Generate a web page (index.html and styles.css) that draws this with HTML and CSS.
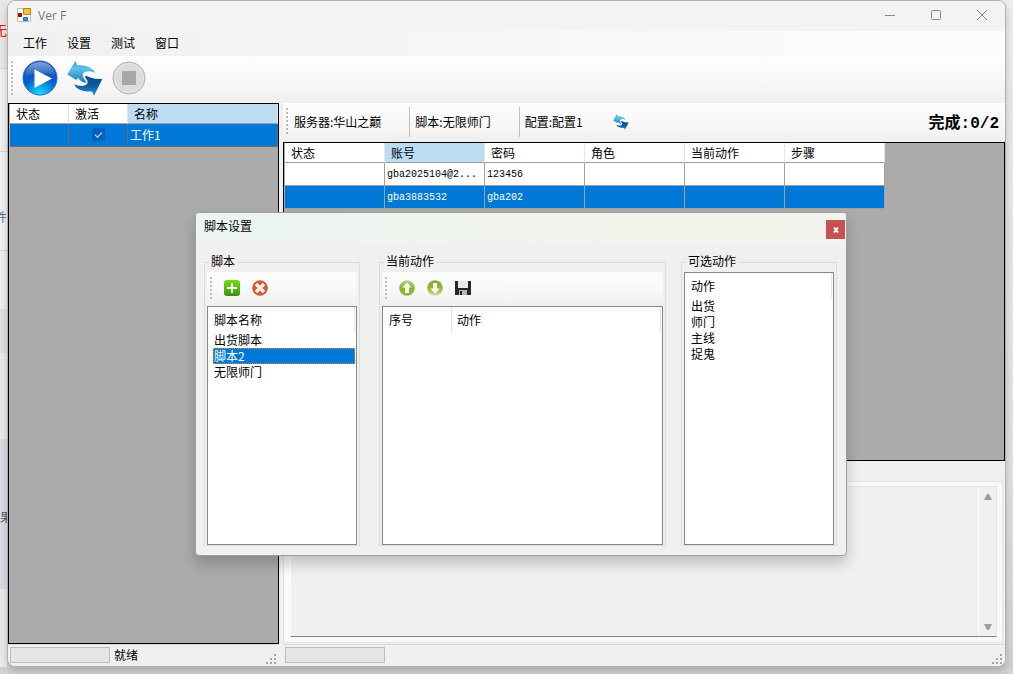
FILE: index.html
```html
<!DOCTYPE html>
<html lang="zh-CN">
<head>
<meta charset="utf-8">
<title>Ver F</title>
<link rel="stylesheet" href="styles.css">
</head>
<body>
<svg class="defs" aria-hidden="true">
  <defs>
    <linearGradient id="light-blue" x1="0" y1="0" x2="0" y2="1"><stop offset="0" stop-color="#3aa0dc"/><stop offset="0.35" stop-color="#5cc0ea"/><stop offset="1" stop-color="#1a7cc4"/></linearGradient>
    <linearGradient id="dark-blue" x1="0" y1="0" x2="0" y2="1"><stop offset="0" stop-color="#0b4d88"/><stop offset="0.5" stop-color="#0a5ba0"/><stop offset="1" stop-color="#2a9ae0"/></linearGradient>
    <radialGradient id="play-fill" cx="0.5" cy="1" r="0.95"><stop offset="0" stop-color="#10e4fb"/><stop offset="0.25" stop-color="#08b0ee"/><stop offset="0.55" stop-color="#0560cc"/><stop offset="1" stop-color="#1148b4"/></radialGradient>
    <linearGradient id="gloss" x1="0" y1="0" x2="0" y2="1"><stop offset="0" stop-color="#fff" stop-opacity="0.5"/><stop offset="1" stop-color="#fff" stop-opacity="0.05"/></linearGradient>
    <linearGradient id="add-fill" x1="0" y1="0" x2="0" y2="1"><stop offset="0" stop-color="#6fdc12"/><stop offset="0.6" stop-color="#4fb80c"/><stop offset="1" stop-color="#3a8a0c"/></linearGradient>
    <linearGradient id="up-fill" x1="0" y1="0" x2="0" y2="1"><stop offset="0" stop-color="#bcd58c"/><stop offset="0.5" stop-color="#8db52c"/><stop offset="1" stop-color="#94b83c"/></linearGradient>
    <linearGradient id="down-fill" x1="0" y1="0" x2="0" y2="1"><stop offset="0" stop-color="#86ae22"/><stop offset="0.5" stop-color="#90b838"/><stop offset="1" stop-color="#cfe0a8"/></linearGradient>
    <symbol id="refresh" viewBox="0 0 102 104">
      <path fill="url(#light-blue)" d="M0 42 23 3 29 15C50 15 73 20 80 37 68 31 50 30 45 40 42 50 52 56 55 66 45 65 36 60 31 51L26 58Z"/>
      <path fill="url(#dark-blue)" d="M101 55 77 103 71 91C50 92 27 88 20 70 34 77 53 77 58 67 61 58 52 54 50 46 60 46 68 52 80 54Z"/>
    </symbol>
  </defs>
</svg>
<div class="desktop">
  <div class="backdrop" aria-hidden="true">
    <div class="band band-top"><span class="bg-red">无</span></div>
    <div class="band band-a"></div>
    <div class="band band-b"><span class="bg-blue">件</span></div>
    <div class="band band-c"></div>
    <div class="band band-d"></div>
    <div class="band band-e"></div>
    <div class="band band-f"><span class="bg-gray">果</span></div>
  </div>
  <main class="window">
    <header class="titlebar">
      <svg class="app-icon" viewBox="0 0 14 14"><path fill="#fff" stroke="#bbb" d="M.5.5h13v13H.5z"/><path fill="#f4c430" stroke="#b88a18" d="M6.500.500h7v6h-7z"/><path fill="#b81414" stroke="#800" d="M1.500 5.500h3v3h-3z"/><path fill="#4a8be8" stroke="#2a60c0" d="M6.500 9.500h4v3h-4z"/></svg>
      <h1 class="title">Ver F</h1>
      <button class="win-btn" type="button" aria-label="最小化"><svg viewBox="0 0 12 12"><path d="M1 6.500h10"/></svg></button>
      <button class="win-btn" type="button" aria-label="最大化"><svg viewBox="0 0 12 12"><rect x="1.500" y="1.500" width="9" height="9" rx="1"/></svg></button>
      <button class="win-btn" type="button" aria-label="关闭"><svg viewBox="0 0 12 12"><path d="M1 1l10 10M11 1 1 11"/></svg></button>
    </header>
    <nav class="menubar">
      <button type="button">工作</button><button type="button">设置</button><button type="button">测试</button><button type="button">窗口</button>
    </nav>
    <div class="toolbar main-tools">
      <span class="grip"></span>
      <button class="big-tool" type="button" aria-label="开始"><svg viewBox="0 0 36 36"><circle cx="18" cy="18" r="17" fill="url(#play-fill)" stroke="#2a68c4"/><path fill="url(#gloss)" d="M3 16C3 7 10 2 18 2s15 5 15 14c-8-4-22-3-30 0z"/><path fill="#fff" d="M12.500 9.500 30 18.500 12.500 28z"/></svg></button>
      <button class="big-tool" type="button" aria-label="刷新"><svg viewBox="0 0 102 104"><use href="#refresh"/></svg></button>
      <button class="big-tool" type="button" aria-label="停止"><svg viewBox="0 0 36 36"><circle cx="17" cy="18" r="16" fill="#dcdcdc" stroke="#b0b0b0"/><circle cx="17" cy="18" r="14.500" fill="none" stroke="#e8e8e8"/><path fill="#a8a8a8" d="M10 11h14v14H10z"/></svg></button>
    </div>
    <div class="workspace">
      <section class="column">
        <div class="grid-panel">
          <table class="data jobs">
            <colgroup><col class="job-col"><col class="job-col"><col></colgroup>
            <thead><tr><th>状态</th><th>激活</th><th class="current">名称</th></tr></thead>
            <tbody><tr class="selected"><td></td><td class="center"><input class="check" type="checkbox" checked aria-label="激活"></td><td>工作1</td></tr></tbody>
          </table>
        </div>
        <footer class="status"><progress value="0" max="100" aria-label="进度"></progress><span>就绪</span><svg class="size-grip" viewBox="0 0 10 10"><path d="M8 0h2v2H8zM4 4h2v2H4zM8 4h2v2H8zM0 8h2v2H0zM4 8h2v2H4zM8 8h2v2H8z"/></svg></footer>
      </section>
      <section class="column">
        <div class="toolbar info-tools">
          <span class="grip"></span>
          <button class="info" type="button">服务器:华山之巅</button>
          <button class="info" type="button">脚本:无限师门</button>
          <button class="info" type="button">配置:配置1</button>
          <button class="refresh-small" type="button" aria-label="刷新"><svg viewBox="0 0 102 104"><use href="#refresh"/></svg></button>
          <strong class="done">完成:0/2</strong>
        </div>
        <div class="grid-panel accounts-panel">
          <table class="data accounts">
            <thead><tr><th>状态</th><th class="current">账号</th><th>密码</th><th>角色</th><th>当前动作</th><th>步骤</th></tr></thead>
            <tbody>
              <tr><td></td><td>gba2025104@2...</td><td>123456</td><td></td><td></td><td></td></tr>
              <tr class="selected"><td></td><td>gba3883532</td><td>gba202</td><td></td><td></td><td></td></tr>
            </tbody>
          </table>
        </div>
        <div class="log">
          <textarea readonly aria-label="日志"></textarea>
          <div class="scroll">
            <button type="button" aria-label="向上"><svg viewBox="0 0 10 8"><path d="M1 7 4 1h2l3 6z"/></svg></button>
            <button type="button" aria-label="向下"><svg viewBox="0 0 10 8"><path d="M1 1h8L6 7H4z"/></svg></button>
          </div>
        </div>
        <footer class="status"><progress value="0" max="100" aria-label="进度"></progress><svg class="size-grip" viewBox="0 0 10 10"><path d="M8 0h2v2H8zM4 4h2v2H4zM8 4h2v2H8zM0 8h2v2H0zM4 8h2v2H4zM8 8h2v2H8z"/></svg></footer>
      </section>
    </div>
  </main>
  <section class="dialog" role="dialog" aria-labelledby="dialog-title">
    <header class="dialog-title"><h2 id="dialog-title">脚本设置</h2><button class="close" type="button" aria-label="关闭"><svg viewBox="0 0 8 8"><path d="M2 1.500 6 6.500M6 1.500 2 6.500"/></svg></button></header>
    <div class="groups">
      <fieldset class="group scripts">
        <legend>脚本</legend>
        <div class="toolbar group-tools">
          <span class="grip"></span>
          <button type="button" aria-label="添加"><svg viewBox="0 0 16 16"><rect width="16" height="16" rx="3" fill="url(#add-fill)"/><path stroke="#fff" stroke-width="2" d="M8 3v10M3 8h10"/></svg></button>
          <button type="button" aria-label="删除"><svg viewBox="0 0 16 16"><circle cx="8" cy="8" r="7.800" fill="#cb5f35"/><path stroke="#f4f1ee" stroke-width="3.400" d="M4 4l8 8M12 4l-8 8"/></svg></button>
        </div>
        <div class="list">
          <table>
            <thead><tr><th>脚本名称</th></tr></thead>
            <tbody><tr><td>出货脚本</td></tr><tr class="picked"><td>脚本2</td></tr><tr><td>无限师门</td></tr></tbody>
          </table>
        </div>
      </fieldset>
      <fieldset class="group actions">
        <legend>当前动作</legend>
        <div class="toolbar group-tools">
          <span class="grip"></span>
          <button type="button" aria-label="上移"><svg viewBox="0 0 16 16"><circle cx="8" cy="8" r="7.800" fill="url(#up-fill)"/><path fill="#fff" d="M8 2.500 12.500 7.500H10V13H6V7.500H3.500z"/></svg></button>
          <button type="button" aria-label="下移"><svg viewBox="0 0 16 16"><circle cx="8" cy="8" r="7.800" fill="url(#down-fill)"/><path fill="#fff" d="M8 13.500 3.500 8.500H6V3h4v5.500h2.500z"/></svg></button>
          <button type="button" aria-label="保存"><svg viewBox="0 0 16 16"><path fill="#26282c" d="M0 1h3v7h10V1h3v14H0z"/><path fill="#e4e9ee" d="M3 1h10v7H3z"/><path fill="#b4b4b4" d="M4 10h8v5H4z"/><path fill="#222" d="M5 11h2v4H5z"/></svg></button>
        </div>
        <div class="list">
          <table>
            <colgroup><col class="index-col"><col></colgroup>
            <thead><tr><th>序号</th><th class="after">动作</th></tr></thead>
          </table>
        </div>
      </fieldset>
      <fieldset class="group choices">
        <legend>可选动作</legend>
        <div class="list">
          <table>
            <thead><tr><th>动作</th></tr></thead>
            <tbody><tr><td>出货</td></tr><tr><td>师门</td></tr><tr><td>主线</td></tr><tr><td>捉鬼</td></tr></tbody>
          </table>
        </div>
      </fieldset>
    </div>
  </section>
</div>
</body>
</html>
```
FILE: styles.css
```css
* { box-sizing: border-box; }
body { margin: 0; font: 12px/16px "Noto Sans CJK SC", sans-serif; color: #000; }
button { margin: 0; padding: 0; border: 0; background: none; font: inherit; color: inherit; }
svg { display: block; }
h1, h2 { margin: 0; font: inherit; }
.defs { position: absolute; width: 0; height: 0; }

.desktop { position: relative; display: flex; height: 100vh; min-height: 600px; padding: 0 7px 7px 0; overflow: hidden; background: linear-gradient(#eee, #e2e2e2 70%, #d2d2d2); }
.backdrop { display: flex; flex-direction: column; width: 7px; overflow: hidden; background: #ececec; }
.band { display: flex; align-items: center; border-bottom: 1px solid #d8d8d8; }
.band-top { height: 69px; justify-content: flex-end; background: #e9e9e9; padding-bottom: 8px; }
.band-a { height: 83px; background: #f2f2f2; }
.band-b { height: 99px; padding-top: 32px; background: #f2f2f2; justify-content: flex-end; }
.band-c { height: 58px; border: 0; background: #f0f0f0; }
.band-d { height: 44px; border: 0; background: #dfe1e6; }
.band-e { height: 86px; border: 0; background: #ececec; }
.band-f { height: 150px; border: 0; padding-top: 6px; background: #dcdee4; }
.bg-red { color: #f00; font-size: 13px; }
.bg-blue { color: #5a6f90; }
.bg-gray { color: #555a66; }

.window { display: flex; flex: 1; flex-direction: column; min-width: 0; border: 1px solid #b0b0b0; border-radius: 8px; overflow: hidden; background: #f0f0f0; box-shadow: 0 4px 8px rgba(0, 0, 0, 0.2); }
.titlebar { display: flex; align-items: center; height: 30px; padding: 0 0 2px 9px; background: #f3f3f3; }
.app-icon { width: 14px; height: 14px; }
.title { flex: 1; padding: 2px 0 0 7px; color: #777; font-family: "Open Sans", "Noto Sans", sans-serif; }
.win-btn { display: flex; align-items: center; justify-content: center; width: 46px; height: 28px; }
.win-btn svg { width: 12px; height: 12px; fill: none; stroke: #888; }
.menubar { display: flex; height: 25px; padding: 0 0 2px 5px; background: linear-gradient(90deg, #f0f0f0, #fcfcfc 90%); }
.menubar button { padding: 0 10px; }

.toolbar { display: flex; align-items: center; background: linear-gradient(#fdfdfd, #f7f7f7 60%, #efefef); }
.grip { width: 2px; background: repeating-linear-gradient(#bcbcbc 0 2px, transparent 2px 4px); }
.main-tools { height: 47px; padding: 0 3px 4px; gap: 9px; }
.main-tools .grip { height: 34px; }
.big-tool, .big-tool svg { width: 36px; height: 36px; }

.workspace { display: grid; flex: 1; grid-template-columns: 271px minmax(0, 1fr); column-gap: 4px; min-height: 0; }
.column { display: flex; flex-direction: column; min-width: 0; min-height: 0; }
.grid-panel { flex: 1; padding-left: 1px; border: 1px solid #000; background: #ababab; overflow: hidden; }
.accounts-panel { flex: 317 1 0; }
.data { border-collapse: separate; border-spacing: 0; table-layout: fixed; }
.data th { height: 20px; padding: 0 6px; border-right: 1px solid #e5e5e5; border-bottom: 1px solid #a0a0a0; background: #fff; font-weight: normal; text-align: left; }
.data th.current { background: #bcdcf4; }
.data td { height: 23px; padding: 0 2px; border-right: 1px solid #a0a0a0; border-bottom: 1px solid #a0a0a0; background: #fff; background-clip: padding-box; white-space: nowrap; }
.data .selected td { background-color: #0078d7; color: #fff; }
.jobs { width: 100%; }
.data.jobs td { border-color: #6b6b6b; }
.job-col { width: 59px; }
.data .center { text-align: center; line-height: 12px; }
.accounts { width: 600px; }
.accounts td { padding-top: 2px; font-family: "Liberation Mono", "Noto Sans CJK SC", monospace; font-size: 10px; }
.check { display: inline-flex; align-items: center; justify-content: center; width: 13px; height: 13px; margin: 0 0 2px; border-radius: 3px; background: #0561b9; appearance: none; vertical-align: middle; }
.check::before { content: ""; width: 6px; height: 3px; border-bottom: 1px solid #d0e4f6; border-left: 1px solid #d0e4f6; transform: rotate(-45deg); }

.info-tools { height: 39px; padding: 0 6px 2px 3px; }
.info-tools .grip { height: 28px; margin-right: 6px; }
.info { height: 30px; margin-right: 5px; padding-right: 28px; border-right: 1px solid #bdbdbd; white-space: nowrap; }
.info:nth-of-type(3) { margin-right: 2px; border: 0; }
.refresh-small, .refresh-small svg { width: 16px; height: 16px; }
.done { margin-left: auto; padding-top: 4px; font: bold 16px/20px "Liberation Mono", "Noto Sans CJK SC", monospace; }

.log { display: flex; flex: 151 1 0; margin: 20px 2px 1px 0; padding: 4px 5px 5px 6px; border: 1px solid #e3e3e3; background: #f9f9f9; }
.log textarea { flex: 1; min-width: 0; margin: 0; padding: 2px; border: 1px solid #fff; border-top-color: #e3e3e3; border-bottom-color: #808080; background: #f0f0f0; outline: 0; resize: none; }
.scroll { display: flex; flex-direction: column; justify-content: space-between; width: 18px; padding: 6px 4px 5px; border-top: 1px solid #e3e3e3; border-right: 1px solid #e3e3e3; border-bottom: 1px solid #808080; background: #f0f0f0; }
.scroll svg { width: 10px; height: 8px; fill: #9c9c9c; }
.status { display: flex; align-items: center; height: 22px; padding: 0 3px 1px 2px; gap: 4px; border-top: 1px solid #d8d8d8; background: #f0f0f0; }
.status progress { width: 100px; height: 16px; border: 1px solid #bcbcbc; background: #e6e6e6; appearance: none; }
.status progress::-webkit-progress-bar { background: #e6e6e6; }
.size-grip { align-self: flex-end; width: 10px; height: 10px; margin: 0 0 1px auto; fill: #a6a6a6; }

.dialog { position: absolute; top: 212px; left: 195px; width: 652px; border: 1px solid #a0a0a0; border-radius: 4px; background: #f0f0f0; box-shadow: 0 8px 14px rgba(0, 0, 0, 0.2); overflow: hidden; }
.dialog-title { display: flex; justify-content: space-between; align-items: center; height: 30px; padding: 3px 1px 0 8px; background: linear-gradient(90deg, #ebf5f1, #f3f3eb 70%, #f3f3ed); }
.dialog-title h2 { line-height: 20px; align-self: flex-start; }
.close { display: flex; align-items: center; justify-content: center; width: 19px; height: 19px; background: #c75050; }
.close svg { width: 8px; height: 8px; stroke: #fff; stroke-width: 2; }
.groups { display: flex; gap: 15px; padding: 10px 9px 9px 8px; }
.group { display: flex; flex-direction: column; min-width: 0; margin: 0; padding: 1px 2px 0; border: 1px solid #dcdcdc; }
.group legend { height: 18px; margin-left: 2px; padding: 0 2px; line-height: 16px; }
.scripts { width: 156px; margin-right: 4px; }
.actions { flex: 1; }
.choices { width: 156px; }
.group-tools { height: 34px; padding: 0 3px 2px; gap: 12px; border-radius: 3px; }
.group-tools .grip { height: 22px; }
.group-tools button, .group-tools button svg { width: 16px; height: 16px; }
.list { min-height: 239px; padding: 0 1px 0 5px; border: 1px solid #828790; background: #fff; }
.choices .list { min-height: 273px; }
.list table { width: 100%; border-collapse: separate; border-spacing: 0; table-layout: fixed; }
.list th { height: 25px; padding: 0 1px; border-right: 1px solid #e5e5e5; font-weight: normal; text-align: left; }
.list .after { padding-left: 5px; }
.list td { height: 16px; padding: 0 1px; line-height: 14px; border: 1px solid transparent; border-width: 1px 0; }
.list .picked td { border: 1px dotted #e08030; padding: 0; background: #0078d7; color: #fff; }
.index-col { width: 64px; }
```
